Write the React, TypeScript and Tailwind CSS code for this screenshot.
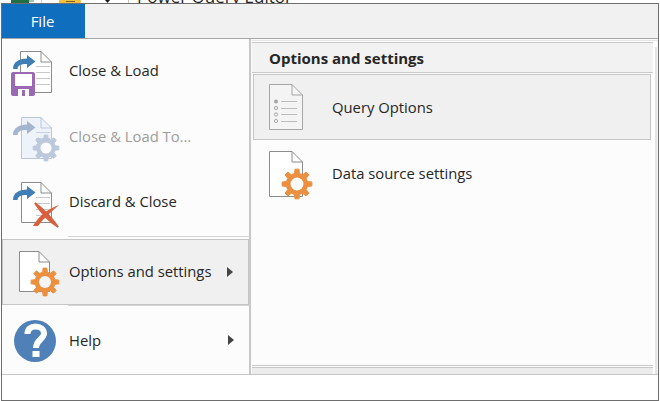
import React from "react";

const gearPath = (cx: number, cy: number, r: number) => {
  const teeth = 8;
  const inner = r * 0.72;
  const parts: string[] = [];
  for (let i = 0; i < teeth; i++) {
    const a = (i / teeth) * Math.PI * 2;
    const step = (Math.PI * 2) / teeth;
    const pts: [number, number][] = [
      [inner, a - step * 0.3],
      [r, a - step * 0.17],
      [r, a + step * 0.17],
      [inner, a + step * 0.3],
    ];
    pts.forEach(([rad, t]) => {
      parts.push(`${parts.length ? "L" : "M"}${(cx + rad * Math.cos(t)).toFixed(2)} ${(cy + rad * Math.sin(t)).toFixed(2)}`);
    });
  }
  return parts.join(" ") + " Z";
};

const Gear = ({ cx, cy, r, color, hole }: { cx: number; cy: number; r: number; color: string; hole: string }) => (
  <>
    <path d={gearPath(cx, cy, r)} fill={color} stroke={color} strokeWidth="1" strokeLinejoin="round" />
    <circle cx={cx} cy={cy} r={r * 0.43} fill={hole} />
  </>
);

const Doc = ({ x, y, w, h, stroke = "#8c8c8c", fill = "#ffffff", fold = 11 }: { x: number; y: number; w: number; h: number; stroke?: string; fill?: string; fold?: number }) => (
  <>
    <path d={`M${x + 0.5} ${y + 0.5} H${x + w - fold} L${x + w - 0.5} ${y + fold} V${y + h - 0.5} H${x + 0.5} Z`} fill={fill} stroke={stroke} />
    <path d={`M${x + w - fold} ${y + 0.5} V${y + fold} H${x + w - 0.5}`} fill="none" stroke={stroke} />
  </>
);

const DocLines = ({ ys, color }: { ys: number[]; color: string }) => (
  <>
    {ys.map((y) => (
      <rect key={y} x="36" y={y} width="14" height="1" fill={color} />
    ))}
  </>
);

const Arrow = ({ dy, color }: { dy: number; color: string }) => (
  <path
    transform={`translate(0 ${dy})`}
    d="M13 69 C13 62 19 58.5 27 58.5 V55 L35.5 61.5 L27 68 V64 C21 64 18 65 17.5 69 Z"
    fill={color}
  />
);

const CloseLoadIcon = () => (
  <svg width="60" height="60" viewBox="2 42 60 60" className="shrink-0">
    <Doc x={20} y={51} w={32} h={42} />
    <DocLines ys={[66, 72, 78, 84]} color="#c8c8c8" />
    <Arrow dy={0} color="#3f7fb5" />
    <rect x="11" y="72" width="24" height="24" rx="2" fill="#9a68b4" />
    <rect x="15" y="74" width="17" height="12" fill="#ffffff" />
    <rect x="18" y="89" width="11" height="7" fill="#ffffff" />
    <rect x="22" y="90" width="3" height="6" fill="#9a68b4" />
  </svg>
);

const CloseLoadToIcon = () => (
  <svg width="60" height="60" viewBox="2 108 60 60" className="shrink-0">
    <Doc x={21} y={117} w={31} h={42} stroke="#b9c7dd" fill="#eef2f9" />
    <DocLines ys={[132, 138, 144, 150]} color="#c8d2e3" />
    <Arrow dy={66} color="#a3b5cf" />
    <Gear cx={46} cy={148} r={13} color="#bcc8dc" hole="#fcfcfc" />
  </svg>
);

const DiscardIcon = () => (
  <svg width="60" height="60" viewBox="2 174 60 60" className="shrink-0">
    <Doc x={21} y={183} w={31} h={41} />
    <DocLines ys={[198, 204, 210, 216]} color="#c8c8c8" />
    <Arrow dy={132} color="#3f7fb5" />
    <path d="M33 227 C38 218 47 210 59 206 C51 213 43 220 38 227 Z" fill="#d9603f" />
    <path d="M35 204 C43 210 51 218 58 228 C50 223 42 215 35 204 Z" fill="#d9603f" stroke="#d9603f" strokeWidth="2" />
  </svg>
);

const OptionsIcon = () => (
  <svg width="60" height="60" viewBox="3 243 60 60" className="shrink-0">
    <Doc x={19} y={252} w={31} h={41} />
    <Gear cx={45} cy={283} r={14} color="#ec8f3f" hole="#f5f5f5" />
  </svg>
);

const HelpIcon = () => (
  <svg width="60" height="60" viewBox="2 311 60 60" className="shrink-0">
    <circle cx="35" cy="342" r="21" fill="#4f81b8" />
    <path d="M27.5 335 C27.5 330 31 327.5 35.5 327.5 C40.5 327.5 44 330.5 44 334.5 C44 340 36 341 36 349" fill="none" stroke="#ffffff" strokeWidth="6" />
    <rect x="32.5" y="352" width="7" height="6" fill="#ffffff" />
  </svg>
);

const QueryOptionsIcon = () => (
  <svg width="60" height="60" viewBox="254 77 60 60" className="shrink-0">
    <Doc x={269} y={84} w={34} h={46} stroke="#a6a6a6" fill="#f4f4f4" />
    <circle cx="276" cy="101.5" r="2" fill="#a6a6a6" />
    {[108, 114.5, 121].map((y) => (
      <circle key={y} cx="276" cy={y} r="1.6" fill="none" stroke="#a6a6a6" />
    ))}
    {[101, 108, 114, 121].map((y) => (
      <rect key={y} x="281" y={y} width="16" height="1" fill="#bdbdbd" />
    ))}
  </svg>
);

const DataSourceIcon = () => (
  <svg width="60" height="60" viewBox="254 143 60 60" className="shrink-0">
    <Doc x={269} y={150} w={34} h={46} stroke="#8c8c8c" />
    <Gear cx={297} cy={183} r={15} color="#ec8f3f" hole="#fcfcfc" />
  </svg>
);

const Caret = () => (
  <svg width="6" height="10" viewBox="0 0 6 10" className="ml-auto mr-[15px] shrink-0">
    <path d="M0 0 L6 5 L0 10 Z" fill="#444444" />
  </svg>
);

const MenuItem = ({ icon, label, disabled, caret, raised, tall }: { icon: React.ReactNode; label: string; disabled?: boolean; caret?: boolean; raised?: boolean; tall?: boolean }) => (
  <div className={`flex items-center ${tall ? "h-[68px]" : "h-[66px]"}`}>
    <div className="flex w-[67px] shrink-0">{icon}</div>
    <span className={`${raised ? "mb-1" : ""} ${disabled ? "text-[#9c9c9c]" : "text-[#262626]"}`}>{label}</span>
    {caret && <Caret />}
  </div>
);

export default function App() {
  return (
    <div className="h-[401px] w-[660px] overflow-hidden bg-white font-['Open_Sans',sans-serif] text-[14.8px]">
      {/* peek of the title bar above the menu */}
      <div className="flex h-[3px] overflow-hidden">
        <svg width="137" height="3" viewBox="0 0 137 3" className="shrink-0">
          <rect x="11" y="0" width="18" height="3" fill="#1f7145" />
          <rect x="29" y="0" width="5" height="2" fill="#9fc9ae" />
          <rect x="41" y="0" width="1" height="3" fill="#c8c8c8" />
          <rect x="59" y="0" width="22" height="3" rx="1" fill="#f3c03d" />
          <rect x="66" y="1" width="9" height="1" fill="#7a6420" />
          <path d="M105 0 H110 L107.5 3 Z" fill="#1a1a1a" />
          <rect x="128" y="0" width="1" height="3" fill="#c8c8c8" />
        </svg>
        <span className="-mt-[15px] text-[17px] leading-[24px] whitespace-nowrap text-[#262626]">Power Query Editor</span>
      </div>

      {/* window */}
      <div className="ml-px flex h-[398px] w-[658px] flex-col border border-[#6e6e6e] bg-white">
        <div className="flex h-[34px] shrink-0 bg-[#f1f1f1]">
          <div className="flex w-[83px] items-center justify-center bg-[#106ebe] pr-[2px] text-[15px] text-white">File</div>
        </div>
        <div className="h-px shrink-0 bg-[#a6a6a6]" />

        <div className="flex h-[336px] shrink-0 border-b border-[#c6c6c6]">
          {/* left menu */}
          <div className="flex w-[247px] shrink-0 flex-col bg-[#fcfcfc]">
            <MenuItem icon={<CloseLoadIcon />} label="Close & Load" raised />
            <MenuItem icon={<CloseLoadToIcon />} label="Close & Load To..." disabled raised />
            <MenuItem icon={<DiscardIcon />} label="Discard & Close" raised />
            <div className="ml-[66px] h-px bg-[#d4d4d4]" />
            <div className="mt-[2px] flex h-[66px] items-center border border-[#c6c6c6] bg-[#f0f0f0]">
              <div className="flex w-[66px] shrink-0">
                <OptionsIcon />
              </div>
              <span className="mb-[2px] text-[#262626]">Options and settings</span>
              <Caret />
            </div>
            <div className="ml-[66px] h-px bg-[#d4d4d4]" />
            <MenuItem icon={<HelpIcon />} label="Help" caret tall />
          </div>

          <div className="w-[2px] shrink-0 bg-[#c8c8c8]" />

          {/* right panel */}
          <div className="flex min-w-0 flex-1 flex-col bg-[#fafafa] pl-px pt-[1px]">
            <div className="h-px shrink-0 bg-[#e6e6e6]" />
            <div className="flex min-h-0 flex-1 bg-[#ffffff]">
              <div className="flex min-w-0 flex-1 flex-col">
                <div className="mt-px h-px shrink-0 bg-[#c9c9c9]" />
                <div className="flex h-[29px] shrink-0 items-center bg-[#f2f2f2] pl-[17px] pt-[2px] text-[15px] font-bold leading-none text-[#262626]">
                  Options and settings
                </div>
                <div className="h-px shrink-0 bg-[#c9c9c9]" />
                <div className="flex flex-1 flex-col bg-[#fcfcfc] pr-[2px] pt-px">
                  <div className="ml-px flex h-[66px] shrink-0 items-center border border-[#c6c6c6] bg-[#f0f0f0]">
                    <QueryOptionsIcon />
                    <span className="ml-[18px] text-[#262626]">Query Options</span>
                  </div>
                  <div className="ml-[2px] flex h-[67px] shrink-0 items-center">
                    <DataSourceIcon />
                    <span className="ml-[18px] text-[#262626]">Data source settings</span>
                  </div>
                </div>
                <div className="h-px shrink-0 bg-[#c9c9c9]" />
                <div className="h-px shrink-0 bg-white" />
                <div className="h-px shrink-0 bg-[#c9c9c9]" />
                <div className="h-[6px] shrink-0 bg-[#ececec]" />
              </div>
              <div className="w-[2px] shrink-0 bg-white" />
              <div className="mt-[6px] w-[2px] shrink-0 bg-[#e4e4e4]" />
              <div className="w-px shrink-0 bg-[#f5f5f5]" />
            </div>
          </div>
        </div>
      </div>
    </div>
  );
}
